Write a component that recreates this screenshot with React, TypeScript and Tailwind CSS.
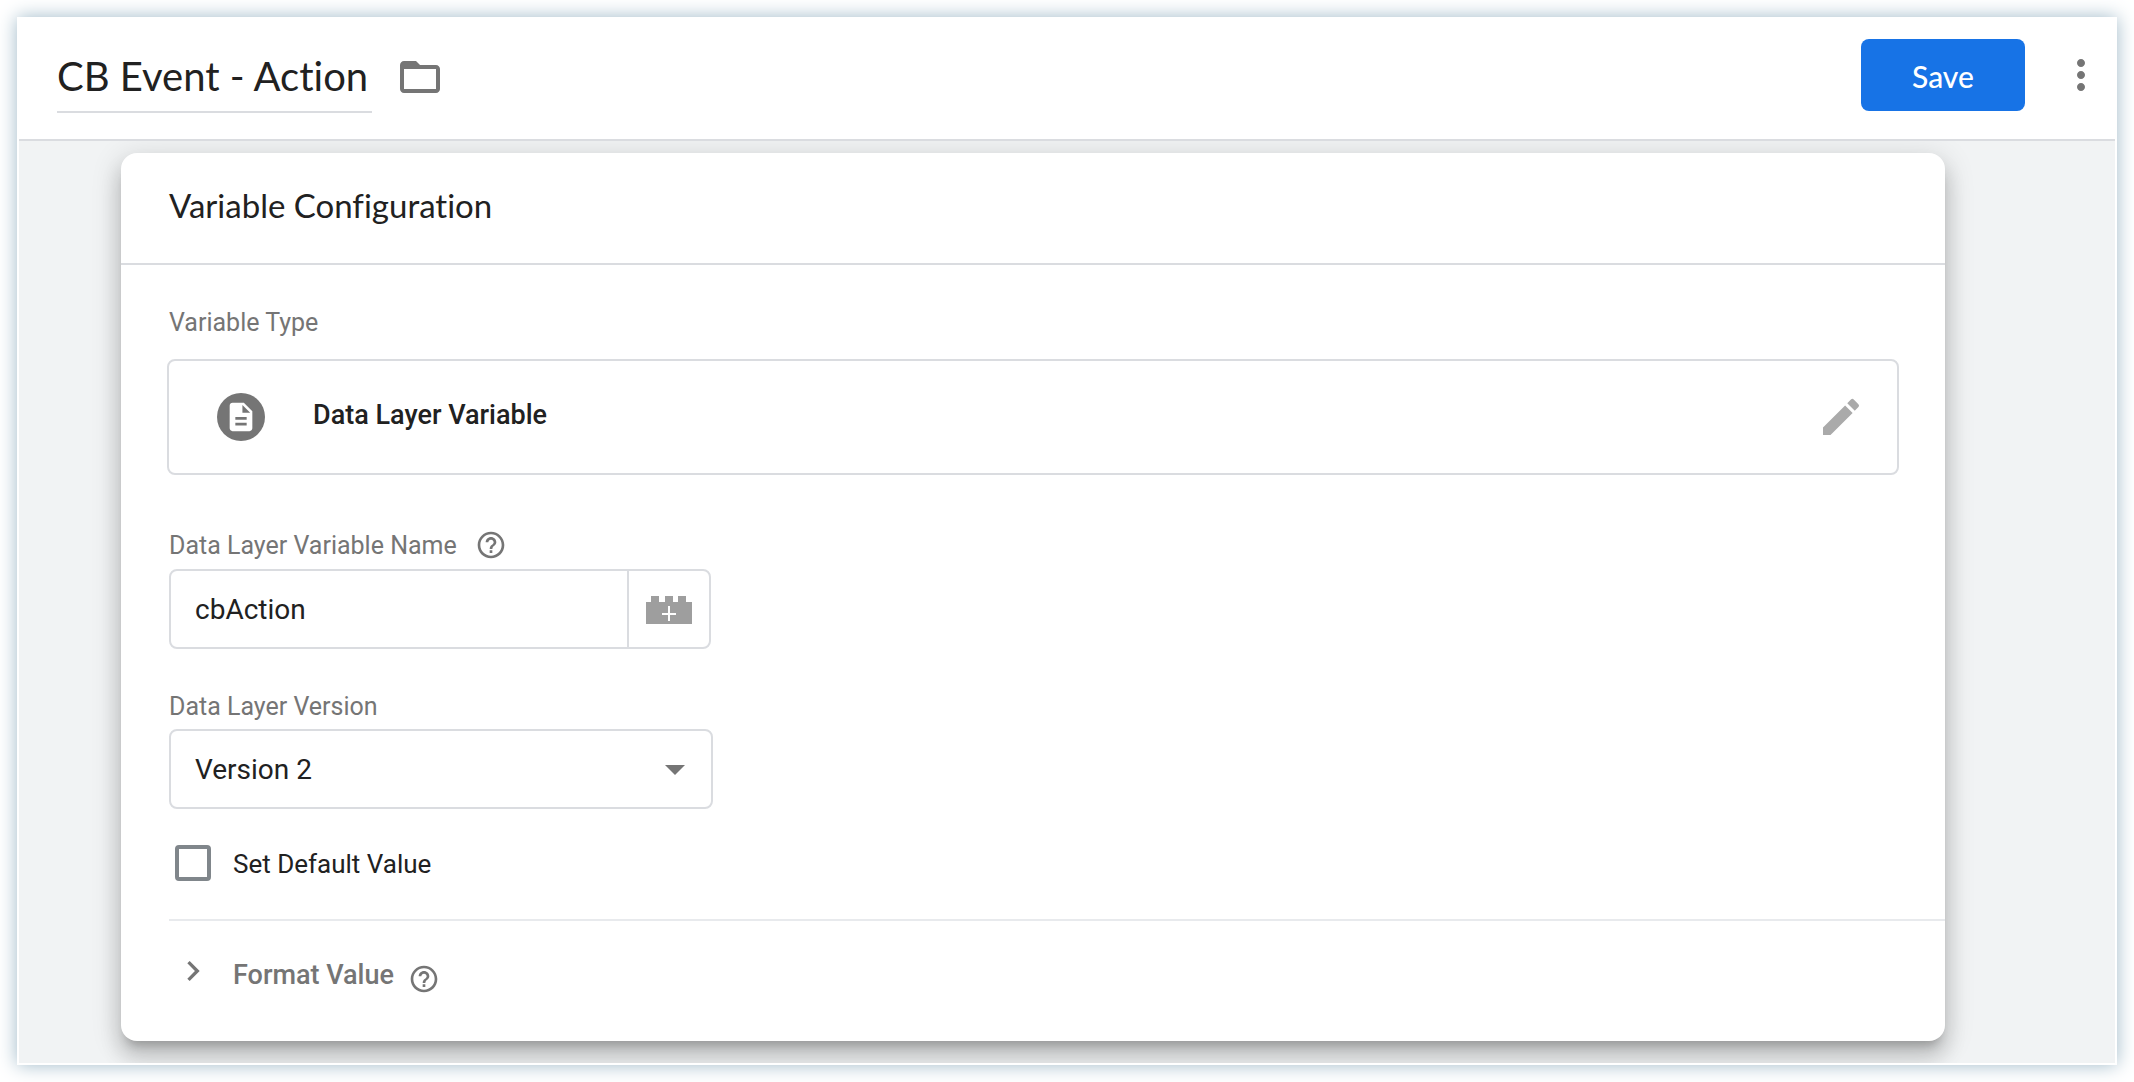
import { useState } from 'react';
import {
  MdArrowDropDown,
  MdChevronRight,
  MdDescription,
  MdEdit,
  MdFolderOpen,
  MdHelpOutline,
  MdMoreVert,
} from 'react-icons/md';

const BrickIcon = () => (
  <svg width="46" height="28" viewBox="0 0 46 28" fill="none" aria-hidden="true">
    <path d="M0 6h5V0h8v6h6V0h8v6h5V0h8v6h6v22H0z" fill="#9e9e9e" />
    <path d="M23 10v15M16 18h14" stroke="#fff" strokeWidth="2" />
  </svg>
);

const HelpButton = ({ label }: { label: string }) => (
  <button type="button" aria-label={label} className="text-[#757575]">
    <MdHelpOutline size={32} />
  </button>
);

const App = () => {
  const [name, setName] = useState('CB Event - Action');
  const [variableName, setVariableName] = useState('cbAction');
  const [version, setVersion] = useState('2');
  const [hasDefault, setHasDefault] = useState(false);

  return (
    <div className="min-h-screen bg-white p-[17px] font-['Roboto',sans-serif] text-[#212121]">
      <div className="bg-white shadow-[0_0_18px_#9fb9c8]">
        {/* top bar */}
        <header className="mx-[2px] flex h-[124px] items-start border-b-2 border-[#dadce0] pt-[22px] pr-[10px] pl-[38px]">
          <input
            aria-label="Variable title"
            value={name}
            onChange={e => setName(e.target.value)}
            className="field-sizing-content h-[74px] border-b-2 border-[#dadce0] pt-[2px] pr-1 font-['Lato',sans-serif] text-[40px] [font-variant-ligatures:none] outline-none"
          />
          <button type="button" aria-label="Move to folder" className="mt-[14px] ml-6 text-[#757575]">
            <MdFolderOpen size={48} />
          </button>
          <button
            type="button"
            className="ml-auto h-[72px] w-[164px] rounded-lg bg-[#1773e6] pt-[2px] font-['Lato',sans-serif] text-[30px] font-medium text-white"
          >
            Save
          </button>
          <button type="button" aria-label="More actions" className="mt-3 ml-8 text-[#757575]">
            <MdMoreVert size={48} />
          </button>
        </header>

        <main className="mx-[2px] overflow-hidden border-b-2 border-white bg-[#f1f3f4] pt-3 pr-[170px] pb-[22px] pl-[102px]">
          <section className="rounded-2xl bg-white shadow-[0_10px_10px_-6px_rgba(0,0,0,0.2),0_16px_20px_2px_rgba(0,0,0,0.14),0_6px_28px_4px_rgba(0,0,0,0.12)]">
            <h2 className="h-[112px] border-b-2 border-[#dadce0] px-12 pt-[30px] font-['Lato',sans-serif] text-[33px] leading-[44px] [font-variant-ligatures:none]">
              Variable Configuration
            </h2>

            <div className="px-[46px] pt-10">
              <p className="px-[2px] pt-[2px] text-[25px] leading-8 text-[#757575]">Variable Type</p>
              <div className="mt-5 flex h-[116px] items-center rounded-lg border-2 border-[#dadce0] pr-8 pl-12">
                <span className="flex size-12 items-center justify-center rounded-full bg-[#757575] text-white">
                  <MdDescription size={34} />
                </span>
                <span className="ml-12 pb-1 text-[27px] leading-9 font-medium">Data Layer Variable</span>
                <button type="button" aria-label="Edit variable type" className="ml-auto text-[#aaa]">
                  <MdEdit size={48} />
                </button>
              </div>
            </div>

            <div className="px-12 pt-[54px]">
              <div className="flex h-8 items-center gap-[18px]">
                <label htmlFor="variable-name" className="pt-[2px] text-[25px] leading-8 text-[#757575]">
                  Data Layer Variable Name
                </label>
                <HelpButton label="About the variable name" />
              </div>
              <div className="mt-2 flex h-20 w-[542px] rounded-lg border-2 border-[#dadce0]">
                <input
                  id="variable-name"
                  value={variableName}
                  onChange={e => setVariableName(e.target.value)}
                  className="min-w-0 flex-1 px-6 pt-[2px] text-[28px] outline-none"
                />
                <button
                  type="button"
                  aria-label="Insert variable"
                  className="flex w-[82px] items-center justify-center border-l-2 border-[#dadce0] pt-[2px]"
                >
                  <BrickIcon />
                </button>
              </div>

              <label htmlFor="version" className="mt-10 block h-8 pt-[2px] text-[25px] leading-8 text-[#757575]">
                Data Layer Version
              </label>
              <div className="relative mt-2 w-[544px]">
                <select
                  id="version"
                  value={version}
                  onChange={e => setVersion(e.target.value)}
                  className="h-20 w-full appearance-none rounded-lg border-2 border-[#dadce0] px-6 pt-[2px] text-[28px] outline-none"
                >
                  <option value="1">Version 1</option>
                  <option value="2">Version 2</option>
                </select>
                <MdArrowDropDown size={48} className="pointer-events-none absolute top-4 right-3.5 text-[#757575]" />
              </div>

              <label className="mt-9 flex h-9 items-center gap-[22px] pl-[6px] text-[26px] leading-9">
                <input
                  type="checkbox"
                  checked={hasDefault}
                  onChange={e => setHasDefault(e.target.checked)}
                  className="size-9 appearance-none rounded border-4 border-[#80868b] checked:bg-[#80868b]"
                />
                <span className="pt-[2px]">Set Default Value</span>
              </label>
            </div>

            <div className="mt-[38px] ml-12 flex h-[122px] items-start border-t-2 border-[#e8eaed] pt-[30px] pl-1">
              <button type="button" className="flex items-start text-[27px] font-medium text-[#757575]">
                <MdChevronRight size={40} />
                <span className="ml-5 pt-[6px] leading-9">Format Value</span>
              </button>
              <div className="mt-3 ml-[14px] flex">
                <HelpButton label="About format value" />
              </div>
            </div>
          </section>
        </main>
      </div>
    </div>
  );
};

export default App;
